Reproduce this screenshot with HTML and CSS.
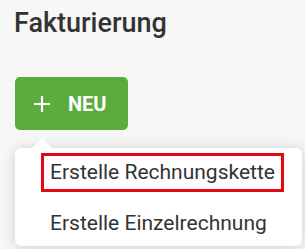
FILE: index.html
```html
<!DOCTYPE html>
<html lang="de">
<head>
    <meta charset="UTF-8">
    <meta name="viewport" content="width=device-width, initial-scale=1.0">
    <title>Fakturierung</title>
    <link rel="stylesheet" href="styles.css">
</head>
<body>

    <div class="page">
        <h1 class="title">Fakturierung</h1>

        <div class="actions">
            <button class="btn-new" type="button">
                <svg class="plus" width="18" height="18" viewBox="0 0 18 18">
                    <path d="M9 1v16M1 9h16" stroke="#fff" stroke-width="2.2" fill="none"/>
                </svg>
                <span>NEU</span>
            </button>

            <div class="menu">
                <div class="menu-item">
                    <span class="marked">Erstelle Rechnungskette</span>
                </div>
                <div class="menu-item second">
                    <span>Erstelle Einzelrechnung</span>
                </div>
            </div>
        </div>

        <div class="list"></div>
    </div>

</body>
</html>
```

FILE: styles.css
```css
body {
    margin: 0;
    background: #f7f7f7;
    font-family: Roboto, "Liberation Sans", sans-serif;
    color: #333;
}

.page {
    width: 305px;
    height: 249px;
    overflow: hidden;
}

.title {
    margin: 7px 0 0 14px;
    font-size: 27px;
    line-height: 32px;
    font-weight: 500;
    color: #333;
}

.actions {
    position: relative;
    margin: 38px 0 0 15px;
}

.btn-new {
    display: flex;
    align-items: center;
    gap: 17px;
    width: 113px;
    height: 53px;
    padding: 0 0 0 18px;
    border: none;
    border-radius: 5px;
    background: #5aac3d;
    color: #fff;
    font-family: Roboto, "Liberation Sans", sans-serif;
    font-size: 20px;
    font-weight: 700;
    cursor: pointer;
}

.menu {
    position: absolute;
    top: 71px;
    left: 0;
    width: 287px;
    box-sizing: border-box;
    padding: 5px 0 6px 26px;
    background: #fff;
    border-radius: 6px;
    box-shadow: 0 1px 14px rgba(0, 0, 0, 0.18);
}

.menu::before {
    content: "";
    position: absolute;
    top: -10px;
    left: 17px;
    border-left: 10px solid transparent;
    border-right: 10px solid transparent;
    border-bottom: 10px solid #fff;
}

.menu-item {
    display: flex;
    font-size: 21px;
    line-height: 23px;
    color: #333;
}

.menu-item span {
    padding: 5px 6px 5px 9px;
}

.menu-item .marked {
    border: 3px solid #e30613;
    padding: 5px 6px;
}

.menu-item.second {
    margin-top: 15px;
}

.list {
    margin: 60px 0 0 15px;
    height: 40px;
    border-left: 1px solid #ddd;
}
```
